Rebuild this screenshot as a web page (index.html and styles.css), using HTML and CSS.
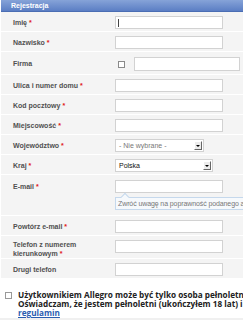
FILE: index.html
```html
<!DOCTYPE html>
<html lang="pl">
<head>
    <meta charset="UTF-8">
    <meta name="viewport" content="width=device-width, initial-scale=1.0">
    <title>Rejestracja</title>
    <link rel="stylesheet" href="styles.css">
</head>
<body>

    <div class="panel">
        <div class="panel-head">Rejestracja</div>

        <div class="row">
            <label class="lbl">Imię <span class="req">*</span></label>
            <div class="field"><span class="txt caret"></span></div>
        </div>
        <div class="row">
            <label class="lbl">Nazwisko <span class="req">*</span></label>
            <div class="field"><span class="txt"></span></div>
        </div>
        <div class="row row-firma">
            <label class="lbl">Firma</label>
            <div class="field"><span class="chk"></span><span class="txt txt-firma"></span></div>
        </div>
        <div class="row">
            <label class="lbl">Ulica i numer domu <span class="req">*</span></label>
            <div class="field"><span class="txt"></span></div>
        </div>
        <div class="row">
            <label class="lbl">Kod pocztowy <span class="req">*</span></label>
            <div class="field"><span class="txt"></span></div>
        </div>
        <div class="row">
            <label class="lbl">Miejscowość <span class="req">*</span></label>
            <div class="field"><span class="txt"></span></div>
        </div>
        <div class="row">
            <label class="lbl">Województwo <span class="req">*</span></label>
            <div class="field">
                <span class="sel sel-woj"><span class="sel-val muted">- Nie wybrane -</span><span class="sel-btn"></span></span>
            </div>
        </div>
        <div class="row">
            <label class="lbl">Kraj <span class="req">*</span></label>
            <div class="field">
                <span class="sel sel-kraj"><span class="sel-val">Polska</span><span class="sel-btn"></span></span>
            </div>
        </div>
        <div class="row row-mail">
            <label class="lbl">E-mail <span class="req">*</span></label>
            <div class="field field-col">
                <span class="txt"></span>
                <div class="hint">Zwróć uwagę na poprawność podanego adresu e-mail</div>
            </div>
        </div>
        <div class="row">
            <label class="lbl">Powtórz e-mail <span class="req">*</span></label>
            <div class="field"><span class="txt"></span></div>
        </div>
        <div class="row row-tel">
            <label class="lbl lbl-two">Telefon z numerem kierunkowym <span class="req">*</span></label>
            <div class="field"><span class="txt"></span></div>
        </div>
        <div class="row">
            <label class="lbl">Drugi telefon</label>
            <div class="field"><span class="txt"></span></div>
        </div>
    </div>

    <div class="terms">
        <span class="chk chk-terms"></span>
        <p class="terms-text">Użytkownikiem Allegro może być tylko osoba pełnoletnia.<br>Oświadczam, że jestem pełnoletni (ukończyłem 18 lat) i akceptuję<br><a href="#">regulamin</a></p>
    </div>
    <div class="foot"></div>

</body>
</html>
```

FILE: styles.css
```css
html, body {
    margin: 0;
    padding: 0;
    overflow: hidden;
}

body {
    font-family: "Liberation Sans", Arial, sans-serif;
    background: #fff;
    width: 243px;
    height: 320px;
}

.panel {
    margin-left: 1px;
    overflow: hidden;
}

.panel-head {
    height: 12px;
    box-sizing: border-box;
    padding-left: 10px;
    background: linear-gradient(#86a3d8, #5b7ec4);
    border-bottom: 1px solid #4a6db3;
    color: #fff;
    font-weight: bold;
    font-size: 7px;
    line-height: 11px;
}

.row {
    display: flex;
    align-items: flex-start;
    background: #f4f4f4;
    border-bottom: 1px solid #fff;
    padding: 4px 0 2px 12px;
    height: 13px;
}

.row-firma { height: 15px; padding-top: 5px; }
.row-mail { height: 33px; padding-top: 5px; }
.row-tel { height: 19px; padding: 3px 0 0 12px; }

.lbl {
    width: 102px;
    flex-shrink: 0;
    font-size: 7px;
    font-weight: bold;
    color: #505050;
    line-height: 13px;
}

.lbl-two {
    line-height: 8.5px;
    padding-top: 2px;
    padding-right: 20px;
    box-sizing: border-box;
}

.req {
    color: #e01818;
}

.field {
    display: flex;
    align-items: center;
    gap: 8px;
}

.field-col {
    flex-direction: column;
    align-items: flex-start;
    gap: 4px;
}

.txt {
    display: block;
    width: 108px;
    height: 13px;
    box-sizing: border-box;
    border: 1px solid #d2d2d2;
    background: #fff;
}

.row-tel .txt {
    margin-top: 1px;
}

.caret {
    background: linear-gradient(#444, #444) 2px 2px / 1px 8px no-repeat, #fff;
}

.txt-firma {
    width: 106px;
    height: 14px;
}

.row-firma .field {
    margin-left: 3px;
    gap: 9px;
}

.chk {
    display: block;
    flex-shrink: 0;
    width: 7px;
    height: 7px;
    box-sizing: border-box;
    border: 1px solid #8a8a8a;
    background: #fff;
}

.sel {
    display: flex;
    align-items: center;
    height: 13px;
    box-sizing: border-box;
    border: 1px solid #d2d2d2;
    background: #fff;
    padding: 0 1px 0 3px;
}

.sel-woj { width: 89px; }
.sel-kraj { width: 98px; }

.sel-val {
    flex: 1;
    font-size: 7px;
    color: #111;
}

.muted {
    color: #777;
}

.sel-btn {
    position: relative;
    width: 8px;
    height: 9px;
    box-sizing: border-box;
    background: #ececec;
    border-top: 1px solid #fff;
    border-left: 1px solid #fff;
    border-right: 1px solid #666;
    border-bottom: 1px solid #666;
}

.sel-btn::after {
    content: "";
    position: absolute;
    left: 1px;
    top: 3px;
    border-left: 2px solid transparent;
    border-right: 2px solid transparent;
    border-top: 2px solid #000;
}

.hint {
    position: relative;
    width: 200px;
    height: 13px;
    box-sizing: border-box;
    border: 1px solid #c5d8ec;
    background: #f6f9fc;
    color: #777;
    font-size: 7px;
    letter-spacing: -0.1px;
    line-height: 11px;
    padding-left: 2px;
    white-space: nowrap;
}

.hint::before {
    content: "";
    position: absolute;
    left: 6px;
    top: -4px;
    width: 5px;
    height: 5px;
    background: #f6f9fc;
    border-top: 1px solid #c5d8ec;
    border-left: 1px solid #c5d8ec;
    transform: rotate(45deg);
}

.terms {
    display: flex;
    align-items: flex-start;
    gap: 6px;
    padding: 11px 0 0 5px;
    height: 28px;
    overflow: hidden;
}

.chk-terms {
    margin-top: 2px;
    border-color: #999;
}

.terms-text {
    margin: 0;
    font-family: "Open Sans", sans-serif;
    font-weight: 700;
    font-size: 8.2px;
    line-height: 9px;
    color: #222;
    white-space: nowrap;
}

.terms-text a {
    color: #2a5db0;
}

.foot {
    margin-top: 0;
    height: 4px;
    background: #f0f0f0;
}
```
